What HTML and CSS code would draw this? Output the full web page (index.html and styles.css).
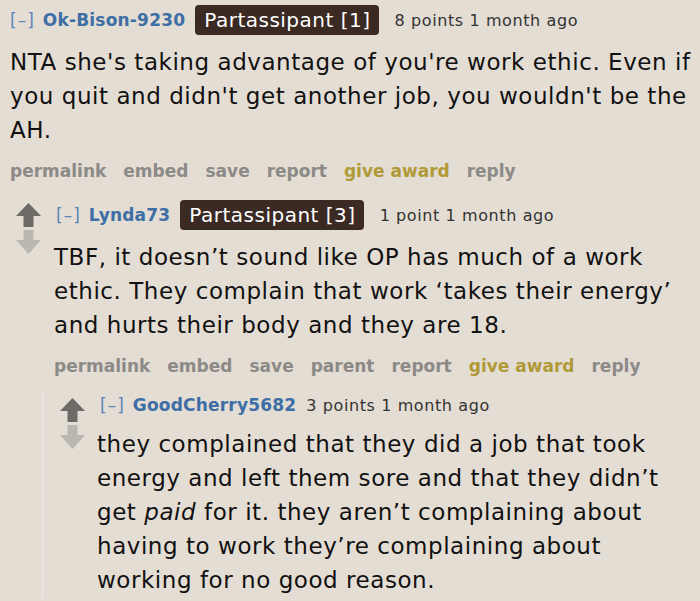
FILE: index.html
```html
<!DOCTYPE html>
<html>
<head>
<meta charset="utf-8">
<link rel="stylesheet" href="styles.css">
</head>
<body>
<div class="thread">
  <div class="comment top">
    <div class="entry">
      <div class="tagline">
        <span class="expand">[–]</span>
        <span class="author">Ok-Bison-9230</span>
        <span class="flair">Partassipant [1]</span>
        <span class="score">8 points 1 month ago</span>
      </div>
      <div class="md">NTA she's taking advantage of you're work ethic. Even if you quit and didn't get another job, you wouldn't be the AH.</div>
      <ul class="buttons">
        <li>permalink</li><li>embed</li><li>save</li><li>report</li><li class="award">give award</li><li>reply</li>
      </ul>
    </div>
  </div>
  <div class="comment level2">
    <div class="row">
      <div class="votes">
        <svg class="arrow" width="25" height="51" viewBox="0 0 25 51"><path d="M12.5 0 L25 13 L17.5 13 L17.5 24 L7.5 24 L7.5 13 L0 13 Z" fill="#6d6a67"/><path d="M7.5 27 L17.5 27 L17.5 37 L25 37 L12.5 51 L0 37 L7.5 37 Z" fill="#bbb7b1"/></svg>
      </div>
      <div class="entry">
        <div class="tagline">
          <span class="expand">[–]</span>
          <span class="author">Lynda73</span>
          <span class="flair">Partassipant [3]</span>
          <span class="score">1 point 1 month ago</span>
        </div>
        <div class="md">TBF, it doesn’t sound like OP has much of a work ethic. They complain that work ‘takes their energy’ and hurts their body and they are 18.</div>
        <ul class="buttons">
          <li>permalink</li><li>embed</li><li>save</li><li>parent</li><li>report</li><li class="award">give award</li><li>reply</li>
        </ul>
      </div>
    </div>
    <div class="child">
      <div class="comment level3">
        <div class="row">
          <div class="votes">
            <svg class="arrow" width="25" height="51" viewBox="0 0 25 51"><path d="M12.5 0 L25 13 L17.5 13 L17.5 24 L7.5 24 L7.5 13 L0 13 Z" fill="#6d6a67"/><path d="M7.5 27 L17.5 27 L17.5 37 L25 37 L12.5 51 L0 37 L7.5 37 Z" fill="#bbb7b1"/></svg>
          </div>
          <div class="entry">
            <div class="tagline small">
              <span class="expand">[–]</span>
              <span class="author">GoodCherry5682</span>
              <span class="score">3 points 1 month ago</span>
            </div>
            <div class="md">they complained that they did a job that took energy and left them sore and that they didn’t get <em>paid</em> for it. they aren’t complaining about having to work they’re complaining about working for no good reason.</div>
          </div>
        </div>
      </div>
    </div>
  </div>
</div>
</body>
</html>
```

FILE: styles.css
```css
html, body {
  margin: 0;
  padding: 0;
  background: #e4ddd4;
}
body {
  font-family: "DejaVu Sans", Verdana, sans-serif;
  color: #111;
  width: 700px;
  height: 601px;
  overflow: hidden;
}
.thread {
  padding: 5px 5px 0 0;
}
.top {
  padding-left: 10px;
}
.tagline {
  display: flex;
  align-items: center;
  height: 30px;
  white-space: nowrap;
}
.expand {
  color: #5a86b8;
  font-size: 17px;
  letter-spacing: 1px;
  margin-right: 8px;
}
.author {
  color: #3d6ea5;
  font-weight: bold;
  font-size: 17px;
  letter-spacing: 0.2px;
  margin-right: 10px;
}
.flair {
  background: #3a2a23;
  color: #fff;
  font-size: 20px;
  letter-spacing: 0.5px;
  border-radius: 4px;
  height: 30px;
  line-height: 30px;
  padding: 0 8px 0 9px;
  margin-right: 16px;
}
.score {
  color: #333;
  font-size: 16px;
  letter-spacing: 0.6px;
}
.md {
  font-size: 23px;
  letter-spacing: 0.55px;
  line-height: 34px;
  margin-top: 10px;
}
.md em {
  font-style: italic;
}
.buttons {
  list-style: none;
  margin: 10px 0 0 0;
  padding: 0;
  display: flex;
  gap: 17px;
  font-weight: bold;
  font-size: 17px;
  color: #8c8a87;
  height: 28px;
  align-items: center;
}
.buttons .award {
  color: #b09a37;
}
.level2 {
  margin-top: 15px;
}
.row {
  display: flex;
}
.votes {
  flex-shrink: 0;
}
.entry {
  min-width: 0;
}
.level2 > .row > .votes {
  margin-left: 16px;
  width: 38px;
  padding-top: 3px;
}
.level2 > .row > .entry .tagline {
  padding-left: 2px;
}
.child {
  margin-left: 42px;
  margin-top: 13px;
  border-left: 1px solid #ebe9ee;
}
.level3 > .row > .votes {
  margin-left: 17px;
  width: 37px;
  padding-top: 5px;
}
.level3 .tagline {
  padding-left: 3px;
}
.tagline.small {
  height: 24px;
}
.arrow {
  display: block;
}
```
